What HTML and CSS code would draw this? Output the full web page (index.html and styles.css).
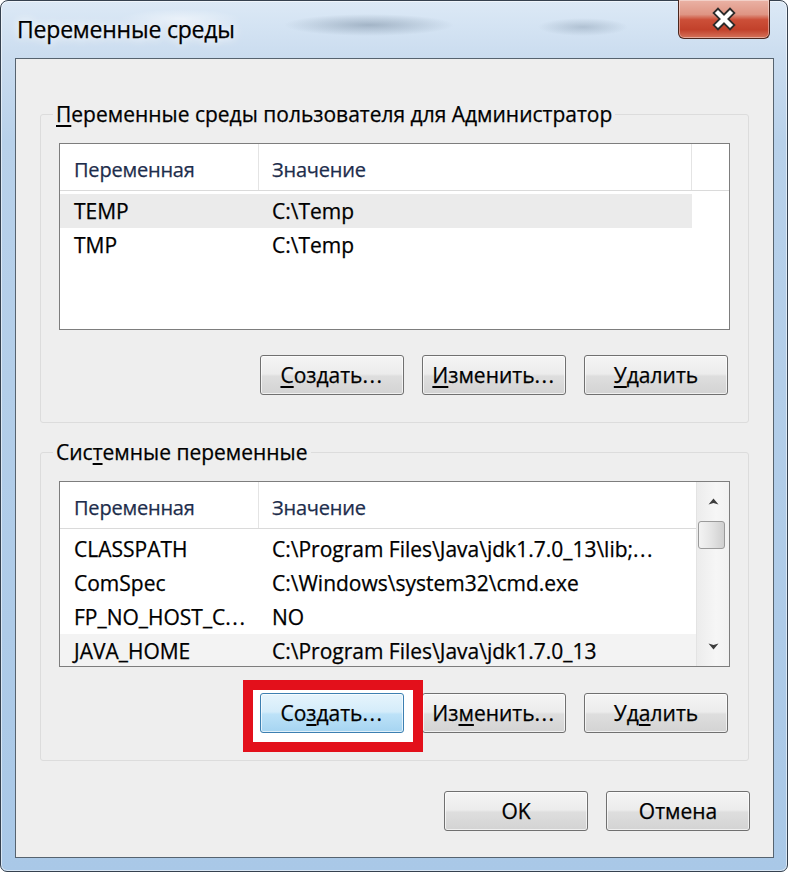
FILE: index.html
```html
<!DOCTYPE html>
<html lang="ru">
<head>
<meta charset="utf-8">
<title>Переменные среды</title>
<link rel="stylesheet" href="styles.css">
</head>
<body>
<div class="window">
  <div class="titlebar">
    <div class="title">Переменные среды</div>
    <div class="close">
      <svg width="26" height="24" viewBox="0 0 26 24">
        <path d="M7 6 L19 18 M19 6 L7 18" stroke="#2b2b2b" stroke-width="8" stroke-linecap="square" fill="none"/>
        <path d="M7 6 L19 18 M19 6 L7 18" stroke="#ffffff" stroke-width="4.4" stroke-linecap="square" fill="none"/>
      </svg>
    </div>
  </div>
  <div class="client">
    <fieldset class="group">
      <legend><u>П</u>еременные среды пользователя для Администратор</legend>
      <div class="list l1">
        <div class="lv">
          <div class="hdr hdr3">
            <div class="hc c1">Переменная</div>
            <div class="hc c2">Значение</div>
            <div class="hc cf"></div>
          </div>
          <div class="rows">
            <div class="row sel"><div class="c1">TEMP</div><div class="c2">C:\Temp</div></div>
            <div class="row"><div class="c1">TMP</div><div class="c2">C:\Temp</div></div>
          </div>
        </div>
      </div>
      <div class="btns">
        <button class="btn"><u>С</u>оздать<span class="dots">...</span></button>
        <button class="btn"><u>И</u>зменить<span class="dots">...</span></button>
        <button class="btn"><u>У</u>далить</button>
      </div>
    </fieldset>

    <fieldset class="group g2">
      <legend>Сис<u>т</u>емные переменные</legend>
      <div class="list l2">
        <div class="lv">
          <div class="hdr hdr2">
            <div class="hc c1">Переменная</div>
            <div class="hc c2 nob">Значение</div>
          </div>
          <div class="rows">
            <div class="row wide"><div class="c1">CLASSPATH</div><div class="c2">C:\Program Files\Java\jdk1.7.0_13\lib;<span class="dots">...</span></div></div>
            <div class="row wide"><div class="c1">ComSpec</div><div class="c2">C:\Windows\system32\cmd.exe</div></div>
            <div class="row wide"><div class="c1">FP_NO_HOST_C<span class="dots">...</span></div><div class="c2">NO</div></div>
            <div class="row wide hov"><div class="c1">JAVA_HOME</div><div class="c2">C:\Program Files\Java\jdk1.7.0_13</div></div>
          </div>
        </div>
        <div class="scroll">
          <div class="sbtn">
            <svg width="11" height="7" viewBox="0 0 11 7"><path d="M0.5 6.5 L5.5 0.5 L10.5 6.5 L5.5 5 Z" fill="#3c3c3c"/></svg>
          </div>
          <div class="thumb"></div>
          <div class="strack"></div>
          <div class="sbtn">
            <svg width="11" height="7" viewBox="0 0 11 7"><path d="M0.5 0.5 L5.5 6.5 L10.5 0.5 L5.5 2 Z" fill="#3c3c3c"/></svg>
          </div>
        </div>
      </div>
      <div class="btns">
        <div class="focuswrap">
          <div class="annot"></div>
          <button class="btn focus">Со<u>з</u>дать<span class="dots">...</span></button>
        </div>
        <button class="btn">Из<u>м</u>енить<span class="dots">...</span></button>
        <button class="btn">Уд<u>а</u>лить</button>
      </div>
    </fieldset>

    <div class="footer">
      <button class="btn">OK</button>
      <button class="btn">Отмена</button>
    </div>
  </div>
</div>
</body>
</html>
```

FILE: styles.css
```css
* { box-sizing: border-box; }
html, body { margin: 0; padding: 0; }
body {
  width: 788px;
  height: 872px;
  overflow: hidden;
  background: #ffffff;
  font-family: "Open Sans", "Noto Sans", sans-serif;
  font-size: 21px;
  color: #000;
  -webkit-text-stroke: 0.25px currentColor;
}
u {
  text-decoration-thickness: 1.5px;
  text-underline-offset: 3px;
}
.dots { letter-spacing: 1.5px; }
.window {
  width: 788px;
  height: 872px;
  border: 1px solid #35414f;
  border-radius: 8px 8px 7px 7px;
  padding: 0 13px 13px 14px;
  display: flex;
  flex-direction: column;
  box-shadow: inset 0 0 0 1px rgba(255,255,255,0.55);
  background:
    radial-gradient(85px 11px at 368px 24px, rgba(70,92,115,0.35), rgba(70,92,115,0)),
    radial-gradient(45px 9px at 582px 26px, rgba(70,92,115,0.25), rgba(70,92,115,0)),
    radial-gradient(60px 10px at 180px 18px, rgba(255,255,255,0.5), rgba(255,255,255,0)),
    linear-gradient(180deg, #dce9f6 0px, #cadcef 57px, #b8d1ea 140px, #a9c8e7 100%);
}
.titlebar {
  height: 57px;
  flex: none;
  display: flex;
  justify-content: space-between;
  align-items: flex-start;
}
.title {
  margin: 14px 0 0 2px;
  font-size: 23px;
  letter-spacing: -0.2px;
  line-height: 28px;
  text-shadow: 0 0 8px rgba(255,255,255,0.95), 0 0 14px rgba(255,255,255,0.8);
}
.close {
  width: 92px;
  height: 39px;
  margin: -1px 4px 0 0;
  border: 1px solid #4b261d;
  border-top: none;
  border-radius: 0 0 6px 6px;
  background: linear-gradient(180deg, #eab2a5 0%, #df9584 38%, #cc4f38 52%, #c2412b 78%, #d5735a 100%);
  box-shadow: inset 0 0 0 1px rgba(255,255,255,0.4);
  display: flex;
  align-items: center;
  justify-content: center;
}
.client {
  flex: 1;
  border: 1px solid #56636f;
  background: #eeeeee;
  padding: 42px 24px 0;
}
.group {
  margin: 0;
  padding: 0 18px 27px;
  border: 1px solid #dcdcdc;
  border-radius: 3px;
  min-width: 0;
}
.g2 { margin-top: 16px; }
.group legend {
  padding: 0 3px;
  margin-left: -6px;
  height: 26px;
  line-height: 26px;
  white-space: nowrap;
}
.list {
  margin-top: 16px;
  height: 187px;
  border: 1px solid #7d7d7d;
  background: #ffffff;
  display: flex;
  overflow: hidden;
}
.l2 { height: 186px; }
.lv { flex: 1; min-width: 0; }
.hdr {
  display: grid;
  height: 47px;
  border-bottom: 1px solid #dadada;
}
.hdr3 { grid-template-columns: 199px 433px 1fr; }
.hdr2 { grid-template-columns: 199px 1fr; }
.hc {
  height: 46px;
  padding-top: 6px;
  line-height: 40px;
  font-size: 20px;
  letter-spacing: -0.2px;
  color: #1d2d4c;
  border-right: 1px solid #e4e4e4;
  white-space: nowrap;
}
.hc.cf, .hc.nob { border-right: none; }
.c1 { padding-left: 14px; white-space: nowrap; overflow: hidden; }
.c2 { padding-left: 13px; white-space: nowrap; overflow: hidden; }
.rows { padding-top: 3px; }
.row {
  display: grid;
  grid-template-columns: 199px 433px;
  width: 632px;
  height: 34px;
  line-height: 34px;
}
.row.wide { grid-template-columns: 199px 1fr; width: auto; }
.row.sel { background: #ebebeb; }
.row.hov { background: #f3f3f3; }
.scroll {
  width: 33px;
  flex: none;
  border-left: 1px solid #e3e3e3;
  background: linear-gradient(90deg, #ececec, #f6f6f6 60%, #f1f1f1);
  display: flex;
  flex-direction: column;
}
.sbtn {
  height: 39px;
  display: flex;
  align-items: center;
  justify-content: center;
}
.thumb {
  height: 28px;
  width: 27px;
  margin-left: 1px;
  border: 1px solid #9a9a9a;
  border-radius: 3px;
  background: linear-gradient(90deg, #f3f3f3, #e4e4e4 50%, #cfcfcf);
}
.strack { flex: 1; }
.btns {
  display: flex;
  justify-content: flex-end;
  gap: 18px;
  margin-top: 25px;
  padding-right: 2px;
}
.l2 + .btns { margin-top: 26px; }
.btn {
  width: 144px;
  height: 40px;
  padding: 0;
  border: 1px solid #707070;
  border-radius: 3px;
  font: inherit;
  letter-spacing: inherit;
  color: #000;
  background: linear-gradient(180deg, #f5f5f5 0%, #ececec 47%, #dedede 53%, #d3d3d3 100%);
  box-shadow: inset 0 0 0 1px rgba(255,255,255,0.65);
}
.btn.focus {
  border-color: #3c7fb1;
  background: linear-gradient(180deg, #e6f4fc 0%, #d4ecfa 47%, #bde2f8 53%, #a5d4f1 100%);
  position: relative;
  z-index: 1;
}
.focuswrap {
  position: relative;
  display: flex;
}
.annot {
  position: absolute;
  left: -17px;
  top: -13px;
  right: -19px;
  bottom: -19px;
  border: 10px solid #e3101b;
  background: #ffffff;
  z-index: 0;
}
.footer {
  display: flex;
  justify-content: flex-end;
  gap: 18px;
  margin: 30px -1px 0 0;
}
```
